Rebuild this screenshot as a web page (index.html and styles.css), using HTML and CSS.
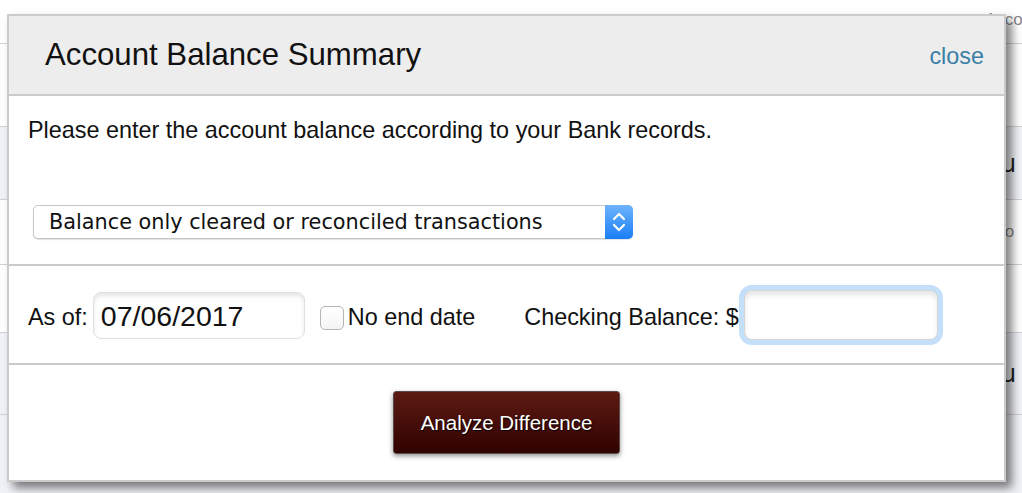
FILE: index.html
```html
<!DOCTYPE html>
<html lang="en">
<head>
    <meta charset="UTF-8">
    <meta name="viewport" content="width=device-width, initial-scale=1.0">
    <title>Account Balance Summary</title>
    <link rel="stylesheet" href="styles.css">
</head>
<body>
    <!-- Page behind the dialog -->
    <div class="bg-table">
        <div class="bg-row row-1"><span class="bg-cell small">Acco</span></div>
        <div class="bg-row row-2"></div>
        <div class="bg-row row-3 tint"><span class="bg-cell large">Su</span></div>
        <div class="bg-row row-4"><span class="bg-cell small">Aco</span></div>
        <div class="bg-row row-5"></div>
        <div class="bg-row row-6 tint"><span class="bg-cell large">Su</span></div>
        <div class="bg-row row-7 tint"></div>
    </div>

    <!-- Dialog -->
    <div class="modal">
        <div class="modal-header">
            <h2 class="modal-title">Account Balance Summary</h2>
            <a class="close-link" href="#">close</a>
        </div>

        <div class="modal-section intro">
            <p class="intro-text">Please enter the account balance according to your Bank records.</p>
            <div class="select-wrap">
                <select class="balance-select">
                    <option>Balance only cleared or reconciled transactions</option>
                </select>
                <span class="select-stepper">
                    <svg width="28" height="34" viewBox="0 0 28 34">
                        <polyline points="9,14 14,9 19,14" fill="none" stroke="#fff" stroke-width="2.2" stroke-linecap="round" stroke-linejoin="round"/>
                        <polyline points="9,20 14,25 19,20" fill="none" stroke="#fff" stroke-width="2.2" stroke-linecap="round" stroke-linejoin="round"/>
                    </svg>
                </span>
            </div>
        </div>

        <div class="modal-section fields">
            <label class="field-label" for="asOf">As of:</label>
            <input type="text" id="asOf" class="date-input" value="07/06/2017">
            <label class="check-label"><span class="check-box"></span>No end date</label>
            <label class="field-label balance-label" for="balance">Checking Balance: $</label>
            <input type="text" id="balance" class="balance-input">
        </div>

        <div class="modal-section actions">
            <button class="analyze-btn">Analyze Difference</button>
        </div>
    </div>
</body>
</html>
```

FILE: styles.css
```css
body {
    margin: 0;
    font-family: 'Liberation Sans', Arial, sans-serif;
    color: #111;
    background: #fff;
    overflow: hidden;
    height: 493px;
    position: relative;
}

/* background table */
.bg-table {
    display: flex;
    flex-direction: column;
}

.bg-row {
    box-sizing: border-box;
    border-bottom: 1px solid #d2d2d2;
    display: flex;
    align-items: center;
    padding-left: 985px;
    white-space: nowrap;
    overflow: hidden;
}

.bg-row.tint {
    background: #f1f2f7;
}

.row-1 { height: 44px; align-items: flex-start; padding-top: 10px; }
.row-2 { height: 83px; }
.row-3 { height: 73px; }
.row-4 { height: 65px; }
.row-5 { height: 68px; }
.row-6 { height: 82px; }
.row-7 { height: 78px; border-bottom: none; }

.bg-cell.small {
    font-size: 17px;
    color: #888;
}

.bg-cell.large {
    font-size: 25px;
    color: #222;
}

/* dialog */
.modal {
    position: absolute;
    left: 7px;
    top: 14px;
    width: 999px;
    box-sizing: border-box;
    border: 2px solid #cbcbcb;
    background: #fff;
    box-shadow: 6px 6px 9px rgba(0, 0, 0, 0.5);
}

.modal-header {
    height: 78px;
    background: #ededed;
    border-bottom: 2px solid #cbcbcb;
    display: flex;
    align-items: center;
    justify-content: space-between;
    padding: 0 20px 0 36px;
}

.modal-title {
    margin: 0;
    font-size: 31.2px;
    font-weight: normal;
    color: #111;
}

.close-link {
    font-size: 23.4px;
    color: #3a7fa6;
    text-decoration: none;
    margin-top: 2px;
}

.modal-section {
    border-bottom: 2px solid #cbcbcb;
}

.modal-section:last-child {
    border-bottom: none;
}

.intro {
    padding: 20px 19px 25px;
}

.intro-text {
    margin: 0;
    font-size: 23.4px;
    line-height: 28px;
}

.select-wrap {
    position: relative;
    margin: 61px 0 0 5px;
    width: 600px;
    height: 34px;
}

.balance-select {
    appearance: none;
    -webkit-appearance: none;
    width: 100%;
    height: 100%;
    box-sizing: border-box;
    border: 1px solid #c6c6c6;
    border-radius: 5px;
    background: #fff;
    box-shadow: 0 1px 1px rgba(0, 0, 0, 0.12);
    padding: 0 0 0 15px;
    font-family: 'DejaVu Sans', sans-serif;
    font-size: 20.8px;
    color: #111;
    outline: none;
}

.select-stepper {
    position: absolute;
    right: 0;
    top: 0;
    width: 28px;
    height: 34px;
    border-radius: 0 5px 5px 0;
    background: linear-gradient(#6eb3fb, #1a7ef7);
    display: flex;
}

.fields {
    display: flex;
    align-items: center;
    padding: 24px 19px 23px;
    height: 50px;
    font-size: 23.4px;
}

.field-label {
    margin-top: 4px;
}

.date-input {
    margin-left: 5px;
    width: 212px;
    height: 47px;
    box-sizing: border-box;
    border: 1px solid #e0e0e0;
    border-radius: 8px;
    box-shadow: inset 0 3px 4px rgba(0, 0, 0, 0.1);
    padding: 2px 0 0 7px;
    font-family: 'Liberation Sans', Arial, sans-serif;
    font-size: 28.5px;
    color: #111;
    outline: none;
}

.check-label {
    display: flex;
    align-items: center;
    margin-left: 15px;
    margin-top: 5px;
}

.check-box {
    width: 24px;
    height: 24px;
    box-sizing: border-box;
    border: 1px solid #b5b5b5;
    border-radius: 5px;
    background: linear-gradient(#fff, #f4f4f4);
    margin-right: 4px;
}

.balance-label {
    margin-left: 49px;
}

.balance-input {
    margin-left: 5px;
    width: 194px;
    height: 50px;
    box-sizing: border-box;
    border: 1px solid #d6d6d6;
    border-radius: 8px;
    box-shadow: inset 0 4px 5px rgba(0, 0, 0, 0.1), 0 0 0 5px #c3dffa;
    font-size: 22px;
    outline: none;
}

.actions {
    display: flex;
    justify-content: center;
    padding: 26px 0;
}

.analyze-btn {
    width: 227px;
    height: 63px;
    border: 1px solid #5a4a48;
    border-radius: 3px;
    background: linear-gradient(#5d1a13, #300200);
    box-shadow: 0 2px 5px rgba(0, 0, 0, 0.45);
    color: #fff;
    font-family: 'Liberation Sans', Arial, sans-serif;
    font-size: 20.5px;
    text-shadow: 1px 1px 1px #000;
    cursor: pointer;
}
```
